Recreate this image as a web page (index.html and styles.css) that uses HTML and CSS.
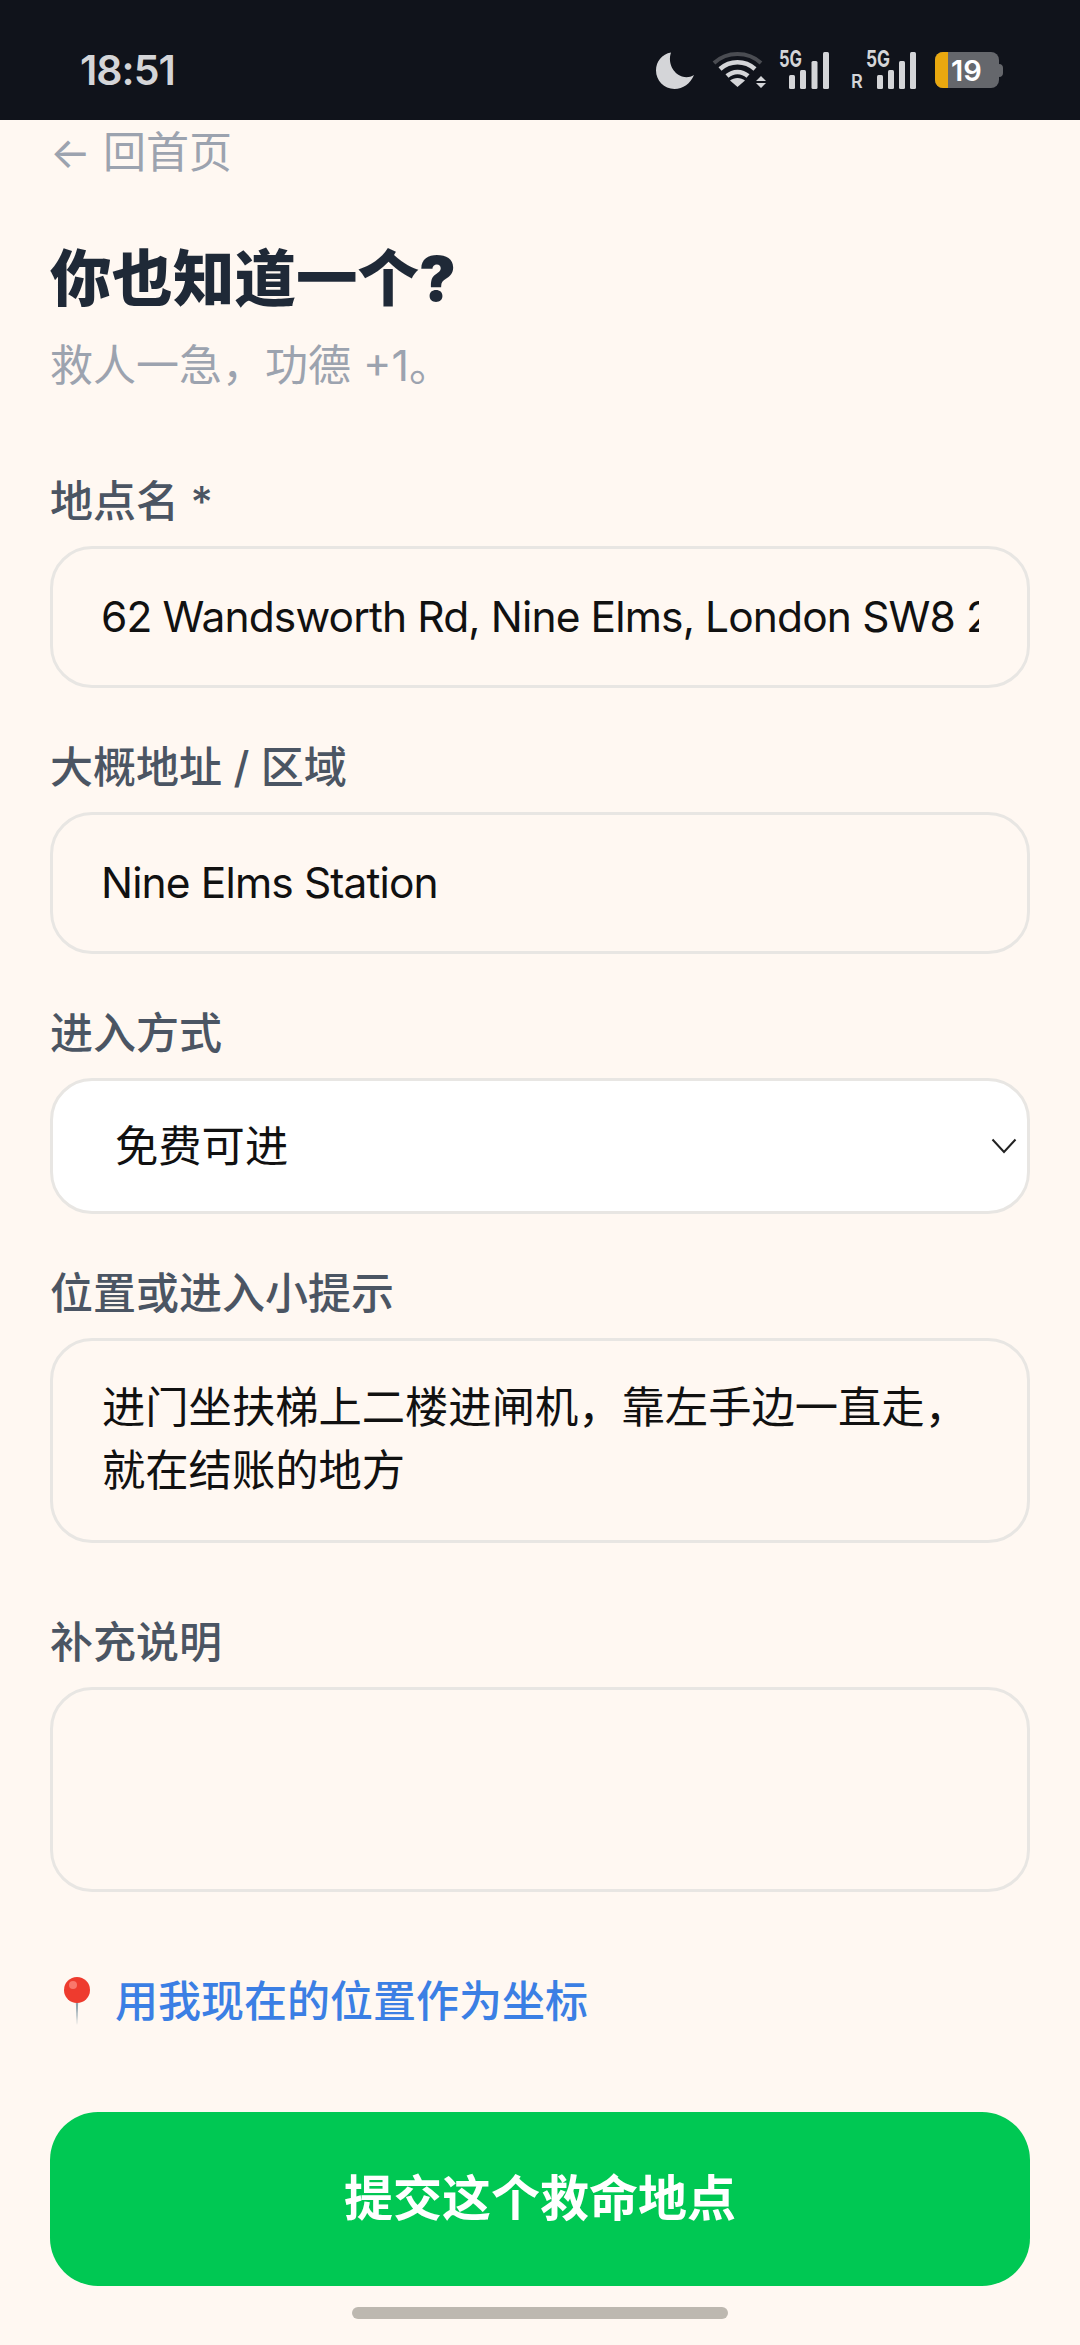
FILE: index.html
```html
<!DOCTYPE html>
<html lang="zh-CN">
<head>
    <meta charset="UTF-8">
    <meta name="viewport" content="width=device-width, initial-scale=1.0">
    <title>你也知道一个?</title>
    <link rel="stylesheet" href="styles.css">
</head>
<body>

    <div class="status-bar">
        <span class="time">18:51</span>
        <div class="status-icons">
            <svg class="moon" width="38" height="37" viewBox="0 0 38 37">
                <path d="M15 0.500C6 2 0 9.500 0 18.500C0 28.500 8 37 18.500 37C27 37 34.500 31.500 38 23C34 25.500 30 25.800 26 24.500C17 21.500 11.500 10.500 15 0.500Z" fill="#d4d5d8"/>
            </svg>
            <svg class="wifi" width="54" height="36" viewBox="0 0 54 36">
                <path d="M2 11C15 -1 36 -1 49 11" fill="none" stroke="#4a4c52" stroke-width="4"/>
                <path d="M8 17C18 8 33 8 43 17" fill="none" stroke="#d4d5d8" stroke-width="4.500"/>
                <path d="M15 24C21 18.500 30 18.500 36 24" fill="none" stroke="#d4d5d8" stroke-width="4.500"/>
                <path d="M25.500 35L18 28.500C22 25 29 25 33 28.500Z" fill="#d4d5d8"/>
                <path d="M49 24L54 29H44ZM44 31H54L49 36Z" fill="#d4d5d8"/>
            </svg>
            <svg class="signal sim-one" width="50" height="50" viewBox="0 -6 50 50">
                <text x="0" y="16" class="net-label" textLength="23" lengthAdjust="spacingAndGlyphs">5G</text>
                <rect x="10" y="24" width="6" height="14" rx="1.500"/>
                <rect x="21" y="19" width="6" height="19" rx="1.500"/>
                <rect x="32.500" y="10" width="6" height="28" rx="1.500"/>
                <rect x="44" y="1" width="6" height="37" rx="1.500"/>
            </svg>
            <svg class="signal sim-two" width="65" height="50" viewBox="0 -6 65 50">
                <text x="0" y="37" class="roam-label">R</text>
                <text x="15" y="16" class="net-label" textLength="24" lengthAdjust="spacingAndGlyphs">5G</text>
                <rect x="26" y="24" width="6" height="14" rx="1.500"/>
                <rect x="37" y="19" width="6" height="19" rx="1.500"/>
                <rect x="48" y="10" width="6" height="28" rx="1.500"/>
                <rect x="59" y="1" width="6" height="37" rx="1.500"/>
            </svg>
            <svg class="battery" width="68" height="36" viewBox="0 0 68 36">
                <rect x="0" y="0" width="64" height="36" rx="8" fill="#65676c"/>
                <path d="M8 0H13V36H8A8 8 0 0 1 0 28V8A8 8 0 0 1 8 0Z" fill="#e9a80f"/>
                <path d="M64 12C67 12 68 14 68 16V21C68 23 67 25 64 25Z" fill="#65676c"/>
                <text x="16" y="28.500" class="battery-text">19</text>
            </svg>
        </div>
    </div>

    <form class="page">
        <a class="back" href="#">← 回首页</a>
        <h1>你也知道一个?</h1>
        <p class="subtitle">救人一急，功德 +1。</p>

        <label class="field-label first">地点名 *</label>
        <input class="field" type="text" value="62 Wandsworth Rd, Nine Elms, London SW8 2LF">

        <label class="field-label">大概地址 / 区域</label>
        <input class="field" type="text" value="Nine Elms Station">

        <label class="field-label">进入方式</label>
        <div class="select-wrap">
            <select class="field select">
                <option>免费可进</option>
            </select>
            <svg class="chevron" width="26" height="16" viewBox="0 0 26 16">
                <path d="M1.500 1.500L13 14L24.500 1.500" fill="none" stroke="#222" stroke-width="2"/>
            </svg>
        </div>

        <label class="field-label">位置或进入小提示</label>
        <textarea class="field area">进门坐扶梯上二楼进闸机，靠左手边一直走，就在结账的地方</textarea>

        <label class="field-label extra">补充说明</label>
        <textarea class="field area"></textarea>

        <a class="locate" href="#">
            <svg class="pin" width="30" height="48" viewBox="0 0 30 48">
                <path d="M13.500 20H16.500L15 48Z" fill="#8fa3ad"/>
                <circle cx="15" cy="13" r="13" fill="#ee3b2e"/>
                <circle cx="11" cy="8" r="4" fill="#f9776b"/>
            </svg>
            <span>用我现在的位置作为坐标</span>
        </a>

        <button class="submit" type="button">提交这个救命地点</button>
        <div class="home-bar"></div>
    </form>

</body>
</html>
```

FILE: styles.css
```css
* {
    box-sizing: border-box;
}
html, body {
    margin: 0;
    height: 2345px;
    overflow: hidden;
}
body {
    font-family: Inter, "Noto Sans CJK SC", sans-serif;
    background-color: #fff8f2;
    color: #111;
}
.status-bar {
    height: 120px;
    background: #10131b;
    padding: 20px 77px 0 80px;
    display: flex;
    justify-content: space-between;
    align-items: center;
}
.time {
    font-size: 41px;
    font-weight: 600;
    color: #d4d5d8;
    letter-spacing: -1px;
}
.status-icons {
    display: flex;
    align-items: center;
}
.moon {
    margin-right: 18px;
}
.wifi {
    margin-right: 13px;
}
.sim-one {
    margin-right: 22px;
}
.sim-two {
    margin-right: 19px;
}
.signal rect {
    fill: #d4d5d8;
}
.net-label {
    font-family: Inter, sans-serif;
    font-size: 23px;
    font-weight: 700;
    fill: #d4d5d8;
}
.roam-label {
    font-family: Inter, sans-serif;
    font-size: 18px;
    font-weight: 600;
    fill: #d4d5d8;
}
.battery-text {
    font-family: Inter, sans-serif;
    font-size: 29px;
    font-weight: 600;
    fill: #fff;
}
.page {
    padding: 2px 50px 0;
}
.back {
    display: block;
    font-size: 43px;
    line-height: 60px;
    color: #9ca3af;
    text-decoration: none;
}
h1 {
    margin: 57px 0 0;
    font-size: 61.500px;
    line-height: 80px;
    font-weight: 900;
    color: #1f2937;
}
.subtitle {
    margin: 16px 0 0;
    font-size: 43px;
    line-height: 60px;
    color: #9ca3af;
}
.field-label {
    display: block;
    margin-top: 49px;
    margin-bottom: 15px;
    font-size: 43px;
    line-height: 60px;
    font-weight: 500;
    color: #4b5563;
}
.field-label.first {
    margin-top: 76px;
}
.field-label.extra {
    margin-top: 69px;
}
.field {
    display: block;
    width: 980px;
    height: 142px;
    padding: 0 48px 2px;
    font-family: Inter, "Noto Sans CJK SC", sans-serif;
    font-size: 42.500px;
    letter-spacing: -0.870px;
    color: #111;
    background: #fff8f2;
    border: 3px solid #e8e6e3;
    border-radius: 42px;
    outline: none;
}
.select-wrap {
    position: relative;
}
.select {
    height: 136px;
    padding: 0 62px;
    font-size: 43.300px;
    letter-spacing: 0;
    background: #fff;
    appearance: none;
}
.chevron {
    position: absolute;
    right: 13px;
    top: 60px;
}
.area {
    height: 205px;
    padding: 35px 49px 0;
    font-size: 43.300px;
    line-height: 63px;
    letter-spacing: 0;
    resize: none;
    overflow: hidden;
}
.locate {
    display: flex;
    align-items: center;
    gap: 23px;
    margin-top: 79px;
    padding-left: 12px;
    font-size: 43px;
    font-weight: 500;
    line-height: 60px;
    color: #3b7fe4;
    text-decoration: none;
}
.submit {
    display: block;
    width: 980px;
    height: 174px;
    margin-top: 81px;
    padding-bottom: 11px;
    border: none;
    border-radius: 48px;
    background: #00c853;
    color: #fff;
    font-family: Inter, "Noto Sans CJK SC", sans-serif;
    font-size: 49px;
    font-weight: 700;
}
.home-bar {
    width: 376px;
    height: 12px;
    margin: 21px auto 0;
    border-radius: 6px;
    background: #bdb8b0;
}
```
